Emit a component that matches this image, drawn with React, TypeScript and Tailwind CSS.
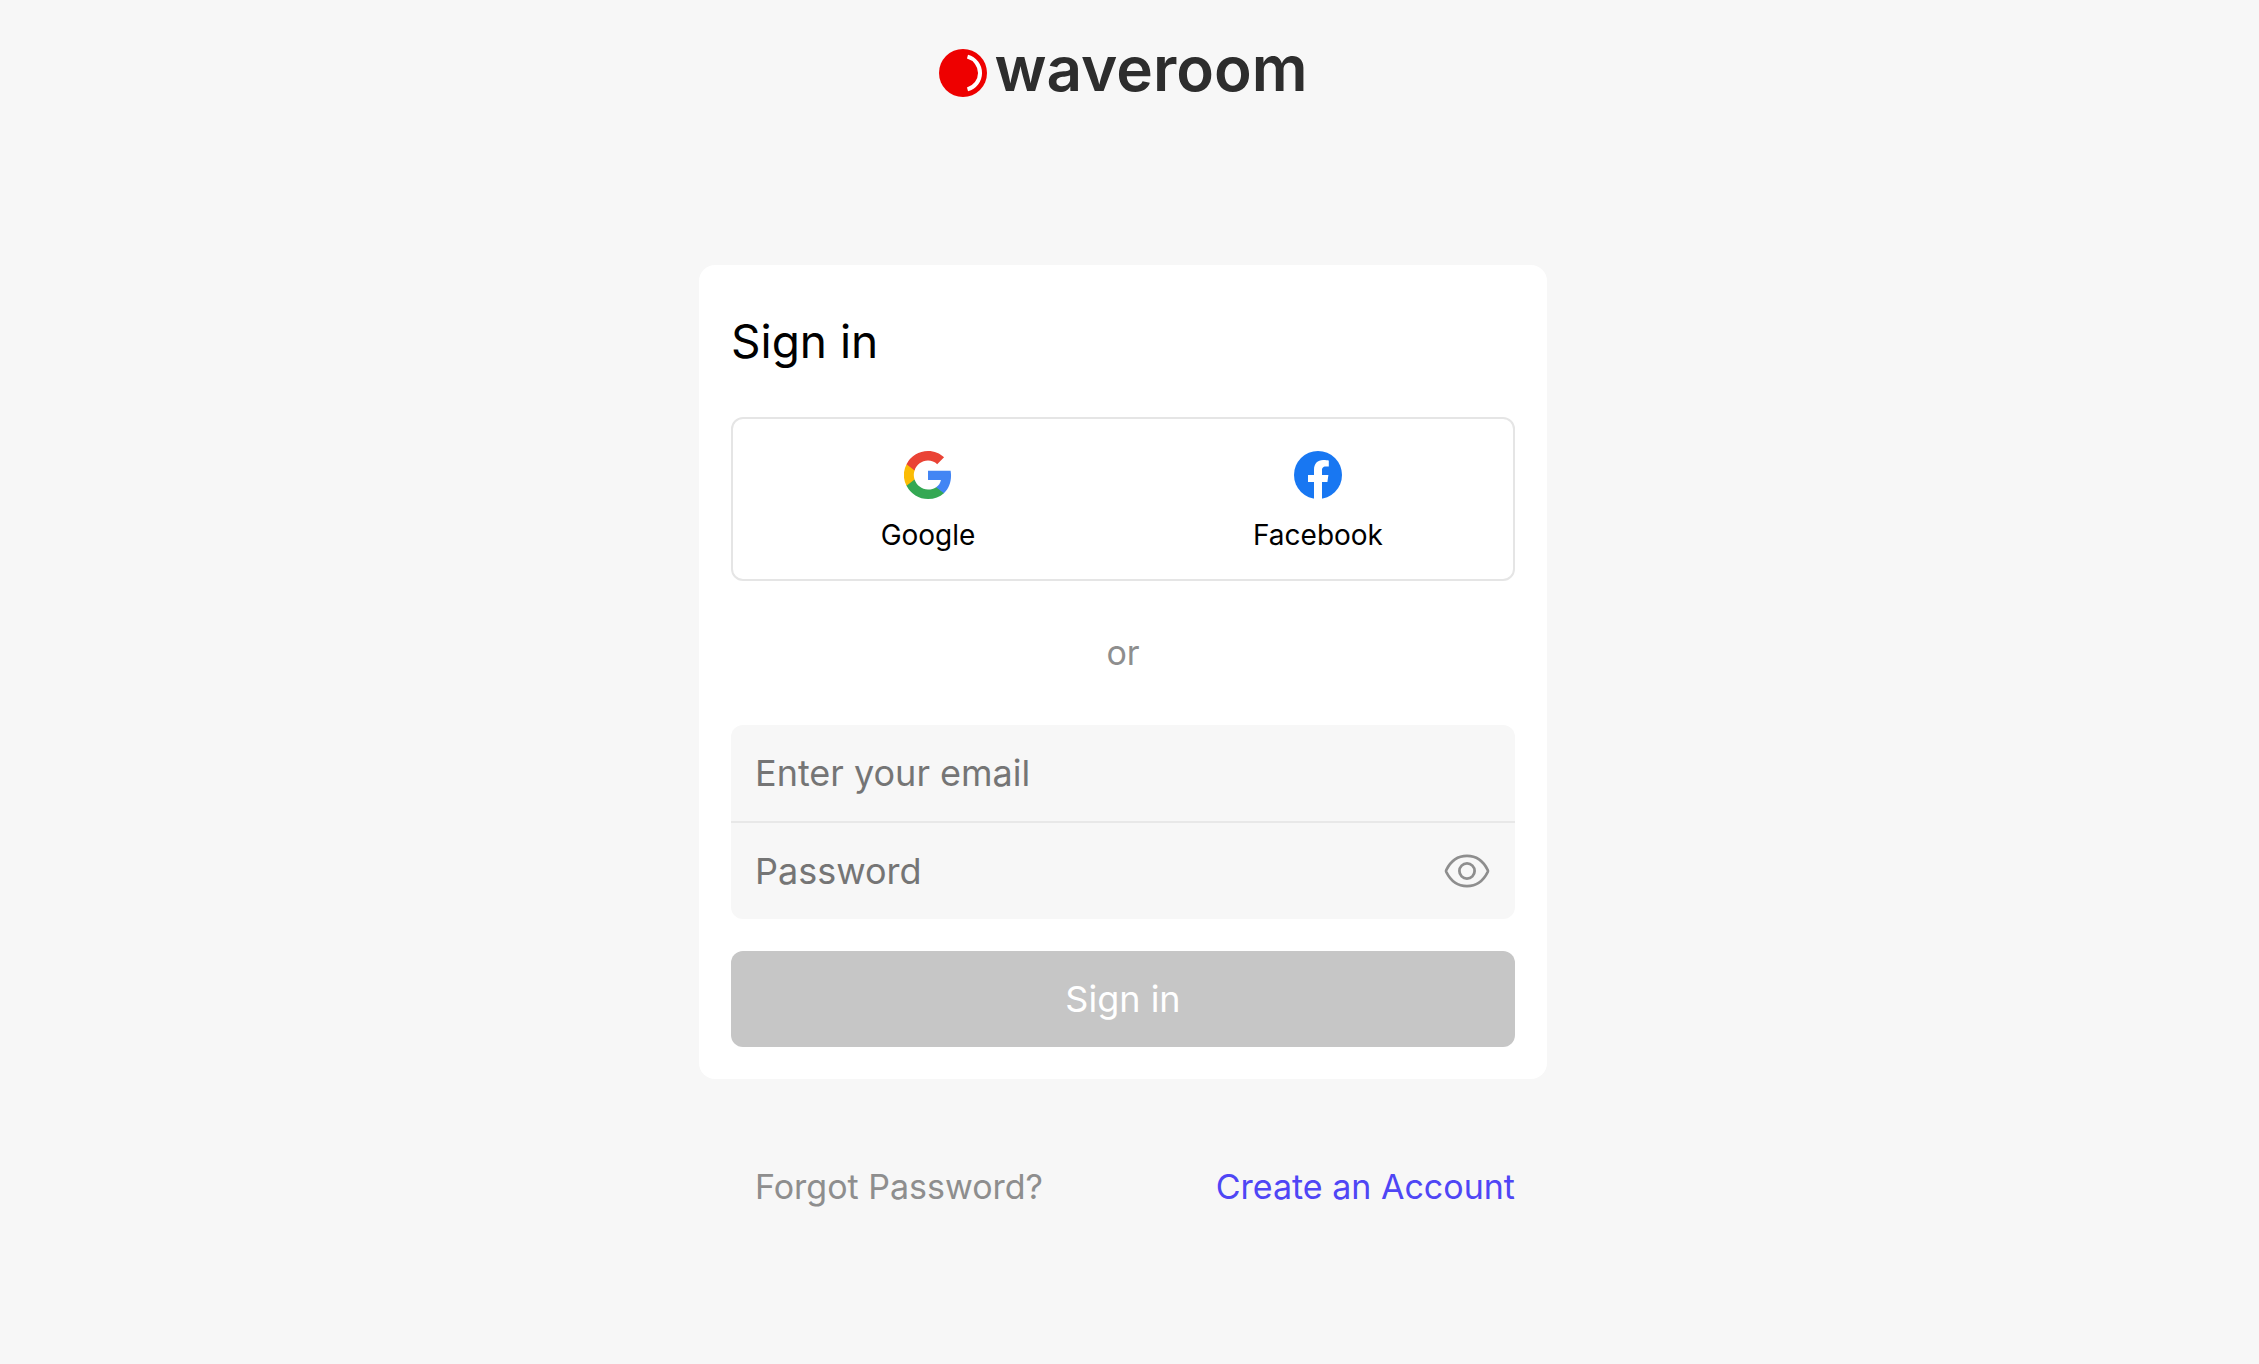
import { useState } from 'react';

function Logo() {
  return (
    <a href="/" className="flex items-center gap-2">
      <svg className="mt-2 size-12" viewBox="0 0 48 48" aria-hidden>
        <circle cx="24" cy="24" r="24" fill="#ee0000" />
        <path d="M28.5 7.6A17 17 0 0 1 28.5 40.4" fill="none" stroke="#fff" strokeWidth="4" />
      </svg>
      <span className="text-[62px] leading-[72px] font-semibold text-[#2d2d2d]">waveroom</span>
    </a>
  );
}

function GoogleIcon() {
  return (
    <svg className="size-12" viewBox="0 0 24 24" aria-hidden>
      <path
        fill="#4285F4"
        d="M23.52 12.27c0-.85-.08-1.67-.22-2.45H12v4.64h6.46a5.52 5.52 0 0 1-2.4 3.62v3.01h3.88c2.27-2.09 3.58-5.17 3.58-8.82z"
      />
      <path
        fill="#34A853"
        d="M12 24c3.24 0 5.96-1.07 7.94-2.91l-3.88-3.01c-1.07.72-2.45 1.15-4.06 1.15-3.13 0-5.78-2.11-6.72-4.95H1.27v3.11A12 12 0 0 0 12 24z"
      />
      <path
        fill="#FBBC05"
        d="M5.28 14.28a7.2 7.2 0 0 1 0-4.56V6.61H1.27a12 12 0 0 0 0 10.78l4.01-3.11z"
      />
      <path
        fill="#EA4335"
        d="M12 4.77c1.76 0 3.34.61 4.59 1.8l3.44-3.44C17.95 1.19 15.24 0 12 0A12 12 0 0 0 1.27 6.61l4.01 3.11C6.22 6.88 8.87 4.77 12 4.77z"
      />
    </svg>
  );
}

function FacebookIcon() {
  return (
    <svg className="size-12" viewBox="0 0 24 24" aria-hidden>
      <circle cx="12" cy="12" r="12" fill="#1877F2" />
      <path
        fill="#fff"
        d="M10 24v-8.5H7V12h3V9.4C10 6.3 11.8 4.5 14.6 4.5c1.3 0 2.8.25 2.8.25v3h-1.5c-1.5 0-1.9.9-1.9 1.9V12h3.2l-.5 3.5H14V24z"
      />
    </svg>
  );
}

function EyeIcon() {
  return (
    <svg
      className="size-12"
      viewBox="0 0 48 48"
      fill="none"
      stroke="#8e8e8e"
      strokeWidth="2.8"
      strokeLinejoin="round"
      aria-hidden
    >
      <path d="M3.3 23C8 13.5 15.500 8.900 24 8.900S40 13.500 44.700 23c.3.700.3 1.300 0 2C40 34.500 32.500 39.100 24 39.100S8 34.500 3.300 25c-.3-.7-.3-1.300 0-2z" />
      <circle cx="24" cy="24" r="7.6" />
    </svg>
  );
}

const providers = [
  { label: 'Google', icon: GoogleIcon },
  { label: 'Facebook', icon: FacebookIcon },
];

const inputClass =
  'h-24 min-w-0 flex-1 bg-transparent px-6 text-4xl font-normal outline-none placeholder:text-[#757575]';

export default function App() {
  const [showPassword, setShowPassword] = useState(false);

  return (
    <div className="flex min-h-screen flex-col items-center bg-[#f7f7f7] pr-[13px] font-['Inter',sans-serif] text-black">
      <header className="pt-[33px]">
        <Logo />
      </header>

      <main className="mt-40 w-full max-w-[848px]">
        <form className="rounded-2xl bg-white p-8" onSubmit={(e) => e.preventDefault()}>
          <h1 className="mt-4 text-[46px] leading-[56px] font-normal">Sign in</h1>

          <div className="mt-12 grid grid-cols-2 rounded-xl border-2 border-[#e5e5e5]">
            {providers.map((p) => (
              <button key={p.label} type="button" className="flex flex-col items-center pt-8 pb-6">
                <p.icon />
                <span className="mt-4 text-[28px] leading-10">{p.label}</span>
              </button>
            ))}
          </div>

          <p className="my-12 text-center text-[34px] leading-[48px] text-[#8e8e8e]">or</p>

          <div className="rounded-xl bg-[#f7f7f7]">
            <div className="flex border-b-2 border-[#e8e8e8]">
              <input type="email" aria-label="Email" placeholder="Enter your email" className={inputClass} />
            </div>
            <div className="flex items-center pr-6">
              <input
                type={showPassword ? 'text' : 'password'}
                aria-label="Password"
                placeholder="Password"
                className={inputClass}
              />
              <button type="button" aria-label="Show password" onClick={() => setShowPassword(!showPassword)}>
                <EyeIcon />
              </button>
            </div>
          </div>

          <button type="submit" className="mt-8 h-24 w-full rounded-xl bg-[#c6c6c6] text-4xl text-white">
            Sign in
          </button>
        </form>

        <nav className="mt-20 flex justify-between pr-8 pl-14 text-[34px] leading-[56px]">
          <a href="/forgot-password" className="text-[#8e8e8e]">
            Forgot Password?
          </a>
          <a href="/sign-up" className="text-[#4f46f5]">
            Create an Account
          </a>
        </nav>
      </main>
    </div>
  );
}
